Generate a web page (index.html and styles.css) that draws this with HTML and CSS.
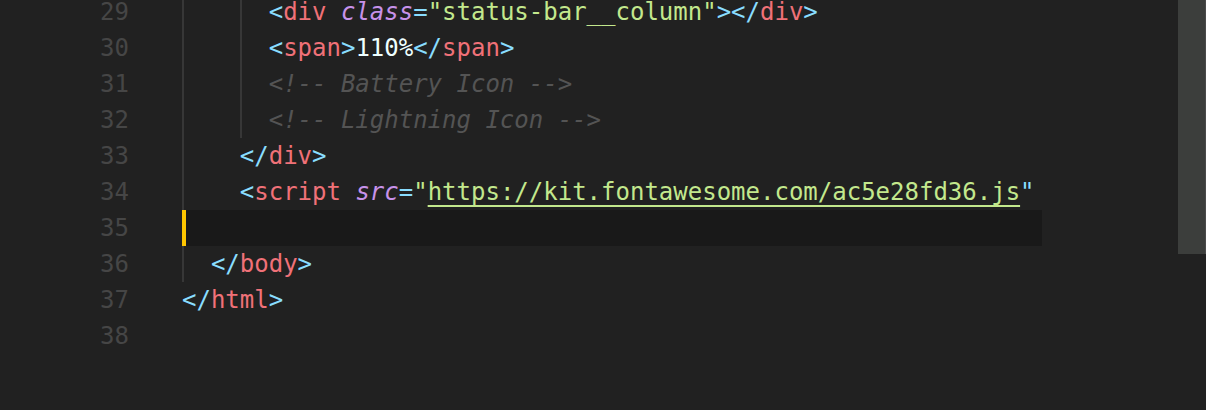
FILE: index.html
```html
<!DOCTYPE html>
<html lang="en">
  <head>
    <meta charset="UTF-8" />
    <meta name="viewport" content="width=device-width, initial-scale=1.0" />
    <title>index.html</title>
    <link rel="stylesheet" href="styles.css">
  </head>
  <body>
    <div id="editor">
      <div id="gutter">
        <div class="num">29</div>
        <div class="num">30</div>
        <div class="num">31</div>
        <div class="num">32</div>
        <div class="num">33</div>
        <div class="num">34</div>
        <div class="num">35</div>
        <div class="num">36</div>
        <div class="num">37</div>
        <div class="num">38</div>
      </div>
      <div id="code">
        <div class="line"><span class="ind guide">  </span><span class="ind">  </span><span class="ind guide">  </span><span class="pun">&lt;</span><span class="tag">div</span> <span class="attr">class</span><span class="pun">=</span><span class="str">"status-bar__column"</span><span class="pun">&gt;&lt;/</span><span class="tag">div</span><span class="pun">&gt;</span></div>
        <div class="line"><span class="ind guide">  </span><span class="ind">  </span><span class="ind guide">  </span><span class="pun">&lt;</span><span class="tag">span</span><span class="pun">&gt;</span><span class="txt">110%</span><span class="pun">&lt;/</span><span class="tag">span</span><span class="pun">&gt;</span></div>
        <div class="line"><span class="ind guide">  </span><span class="ind">  </span><span class="ind guide">  </span><span class="com">&lt;!-- Battery Icon --&gt;</span></div>
        <div class="line"><span class="ind guide">  </span><span class="ind">  </span><span class="ind guide">  </span><span class="com">&lt;!-- Lightning Icon --&gt;</span></div>
        <div class="line"><span class="ind guide">  </span><span class="ind">  </span><span class="pun">&lt;/</span><span class="tag">div</span><span class="pun">&gt;</span></div>
        <div class="line"><span class="ind guide">  </span><span class="ind">  </span><span class="pun">&lt;</span><span class="tag">script</span> <span class="attr">src</span><span class="pun">=</span><span class="str">"<span class="link">https://kit.fontawesome.com/ac5e28fd36.js</span></span><span class="pun">"</span></div>
        <div class="line current"></div>
        <div class="line"><span class="ind guide">  </span><span class="pun">&lt;/</span><span class="tag">body</span><span class="pun">&gt;</span></div>
        <div class="line"><span class="pun">&lt;/</span><span class="tag">html</span><span class="pun">&gt;</span></div>
        <div class="line"></div>
      </div>
      <div class="spacer"></div>
      <div id="scrollbar"></div>
    </div>
  </body>
</html>
```
FILE: styles.css
```css
* {
  margin: 0;
  padding: 0;
  box-sizing: border-box;
}

:root {
  --bg: #212121;
  --line-bg: #191919;
  --guide: #373737;
  --tag: #f07178;
  --pun: #89ddff;
  --attr: #c792ea;
  --str: #c3e88d;
  --com: #545454;
  --txt: #eeffff;
}

body {
  height: 410px;
  overflow: hidden;
  background-color: var(--bg);
  font-family: "DejaVu Sans Mono", monospace;
  font-size: 24px;
}

#editor {
  display: flex;
  align-items: flex-start;
  height: 410px;
}

#gutter {
  width: 182px;
  padding-right: 53px;
  margin-top: -6px;
  text-align: right;
  color: #464646;
}

.num {
  height: 36px;
  line-height: 36px;
}

#code {
  width: 860px;
  margin-top: -6px;
}

.line {
  height: 36px;
  line-height: 36px;
  white-space: pre;
  color: var(--txt);
}

.line.current {
  background-color: var(--line-bg);
  border-left: 4px solid #ffc600;
}

.ind {
  display: inline-block;
  width: 2ch;
  height: 36px;
  vertical-align: top;
}

.guide {
  box-shadow: inset 2px 0 0 var(--guide);
}

.pun {
  color: var(--pun);
}

.tag {
  color: var(--tag);
}

.attr {
  color: var(--attr);
  font-style: italic;
}

.str {
  color: var(--str);
}

.link {
  text-decoration: underline;
  text-decoration-thickness: 2px;
  text-underline-offset: 5px;
}

.com {
  color: var(--com);
  font-style: italic;
}

.txt {
  color: var(--txt);
}

.spacer {
  flex: 1;
}

#scrollbar {
  width: 28px;
  height: 254px;
  background-color: #3c3e3c;
  border-right: 1px solid #4b4b4b;
}
```
